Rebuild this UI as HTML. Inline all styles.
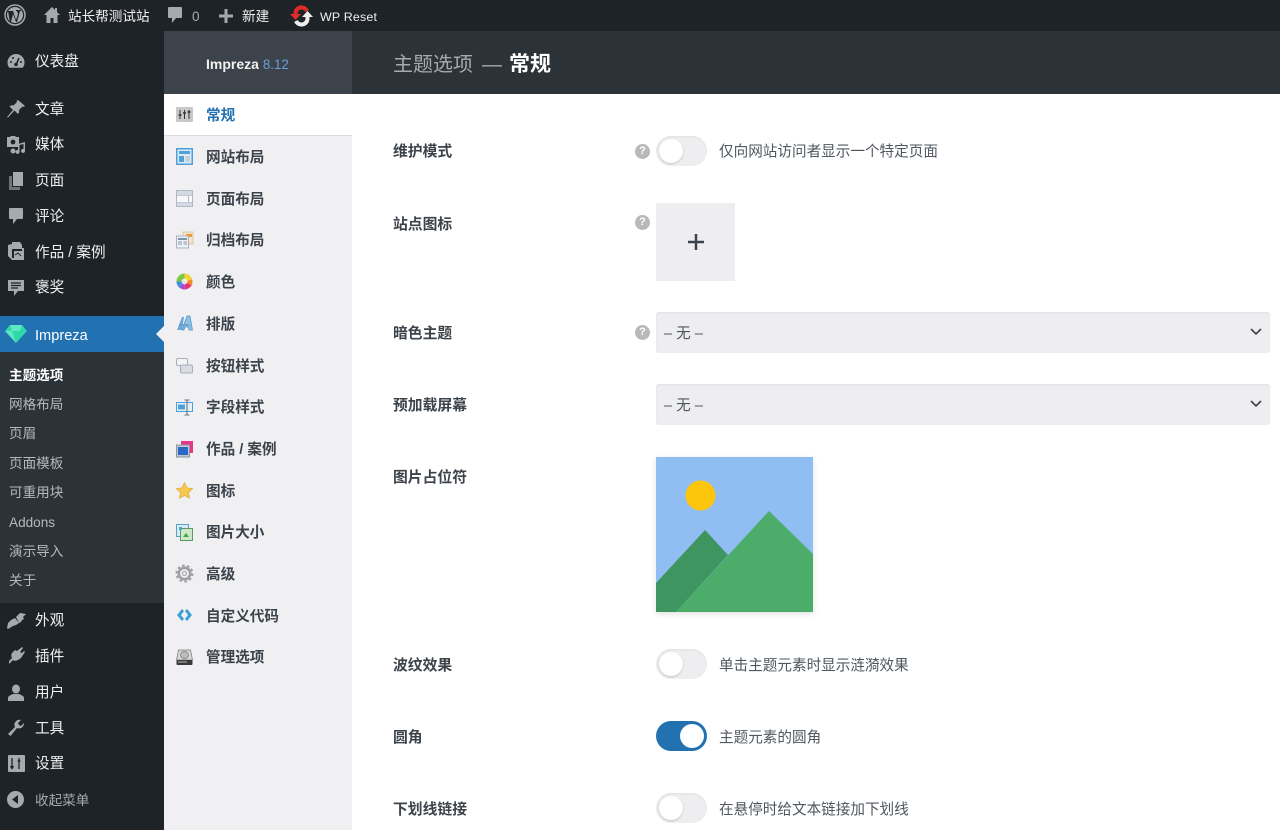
<!DOCTYPE html>
<html lang="zh-CN"><head><meta charset="utf-8"><title>主题选项</title>
<style>
*{box-sizing:border-box}
html,body{margin:0;padding:0;width:1280px;height:830px;overflow:hidden;background:#fff;font-family:"Liberation Sans","Noto Sans CJK SC",sans-serif}
.a{position:absolute}
.t{position:absolute;white-space:nowrap;line-height:20px;height:20px;margin-top:1px}
.m{color:#f0f0f1;font-size:14.6px;left:35px}
.s{color:#b4b9be;font-size:13.6px;left:9px}
.o{color:#3c434a;font-size:14.6px;font-weight:700;left:206px}
.l{color:#3c434a;font-size:14.8px;font-weight:700;left:393px}
.h{color:#50575e;font-size:14.6px;left:719px}
.ic{position:absolute;overflow:visible}
.tg{position:absolute;left:656px;width:51px;height:30px;border-radius:15px;background:#eeeef0;box-shadow:inset 0 1px 2px rgba(0,0,0,.06)}
.tg i{position:absolute;left:3px;top:3px;width:24px;height:24px;border-radius:50%;background:#fff;box-shadow:0 1px 2px rgba(0,0,0,.18)}
.tg.on{background:#2271b1;box-shadow:none}
.tg.on i{left:24px;box-shadow:none}
.q{position:absolute;left:635px;width:15px;height:15px;border-radius:50%;background:#b9b9bb;color:#fff;font-size:11px;font-weight:700;line-height:15px;text-align:center}
.sel{position:absolute;left:656px;width:614px;height:41px;background:#eeeef0;border-radius:3px;box-shadow:inset 0 1px 2px rgba(0,0,0,.06);color:#50575e;font-size:14.6px;line-height:45px;padding-left:8px}
.sel svg{position:absolute;left:594px;top:16px}
</style></head><body>

<!-- base regions -->
<div class="a" style="left:0;top:0;width:1280px;height:31px;background:#1d2327"></div>
<div class="a" style="left:0;top:31px;width:164px;height:799px;background:#1d2327"></div>
<div class="a" style="left:164px;top:31px;width:188px;height:63px;background:#3c434a"></div>
<div class="a" style="left:352px;top:31px;width:928px;height:63px;background:#2c3338"></div>
<div class="a" style="left:164px;top:94px;width:188px;height:736px;background:#f0f0f3"></div>
<div class="a" style="left:164px;top:94px;width:188px;height:42px;background:#fff;border-bottom:1px solid #dcdcde"></div>
<div class="a" style="left:0;top:316px;width:164px;height:36px;background:#2271b1"></div>
<div class="a" style="left:156px;top:326px;width:0;height:0;border-top:8px solid transparent;border-bottom:8px solid transparent;border-right:8px solid #f0f0f3"></div>
<div class="a" style="left:0;top:352px;width:164px;height:251px;background:#2c3338"></div>

<!-- admin bar -->
<svg class="ic" style="left:4px;top:4px" width="22" height="22" viewBox="0 0 22 22"><circle cx="11" cy="11" r="10" fill="none" stroke="#a7aaad" stroke-width="1.500"/><circle cx="11" cy="11" r="8" fill="#a7aaad"/><path d="M4 7h5l3 9 2-6-1-3h-1V6h5v1h-1l-3 11h-1L9 10l-2 8h-1z" fill="#1d2327"/></svg>
<svg class="ic" style="left:43px;top:6px" width="18" height="18" viewBox="0 0 18 18"><path d="M9 1 1 9h2.500v8H7.500v-5h3v5h4V9H17l-3-3V2h-2v2z" fill="#a7aaad"/></svg>
<span class="t" style="left:68px;top:6px;color:#f0f0f1;font-size:13.6px">站长帮测试站</span>
<svg class="ic" style="left:167px;top:6px" width="16" height="18" viewBox="0 0 16 18"><path d="M2 1h12a1 1 0 0 1 1 1v9a1 1 0 0 1-1 1H9l-4 5v-5H2a1 1 0 0 1-1-1V2a1 1 0 0 1 1-1z" fill="#a7aaad"/></svg>
<span class="t" style="left:192px;top:6px;color:#a7aaad;font-size:13.6px">0</span>
<svg class="ic" style="left:219px;top:9px" width="14" height="14" viewBox="0 0 14 14"><path d="M5.500 0h3v5.500H14v3H8.500V14h-3V8.500H0v-3h5.500z" fill="#a7aaad"/></svg>
<span class="t" style="left:242px;top:6px;color:#f0f0f1;font-size:13.6px">新建</span>
<svg class="ic" style="left:290px;top:6px" width="23" height="20" viewBox="0 0 23 20"><path d="M6 10A6 6 0 0 1 17 5" fill="none" stroke="#e02b2b" stroke-width="4"/><path d="M0 8h11l-5.500 6z" fill="#e02b2b"/><path d="M17 10A6 6 0 0 1 6 15" fill="none" stroke="#f0f0f1" stroke-width="4"/><path d="M12 11h11l-5.500-6z" fill="#f0f0f1"/></svg>
<span class="t" style="left:320px;top:6px;color:#f0f0f1;font-size:12.4px;letter-spacing:.2px">WP Reset</span>

<!-- admin menu icons -->
<svg class="ic" style="left:7px;top:53px" width="18" height="16" viewBox="0 0 18 16"><path d="M9 1a8.500 8.500 0 0 0-8.500 8.500c0 2 .7 3.800 1.800 5.200h13.400A8.300 8.300 0 0 0 17.500 9.500 8.500 8.500 0 0 0 9 1z" fill="#a7aaad"/><path d="M9.500 11 12 5" stroke="#1d2327" stroke-width="1.600"/><circle cx="9" cy="11.500" r="1.800" fill="#1d2327"/><circle cx="4" cy="9" r="1" fill="#1d2327"/><circle cx="6" cy="5" r="1" fill="#1d2327"/><circle cx="14" cy="9" r="1" fill="#1d2327"/></svg>
<svg class="ic" style="left:7px;top:100px" width="18" height="18" viewBox="0 0 18 18"><path d="M11 0l7 6-1.500 1-1-.5-3.500 3.500c.5 1.500 0 3-1 4L7.500 10.500 1 17.500 0 17l6-7-3.500-3.500c1-1 2.500-1.500 4-1L10 2l-.5-1z" fill="#a7aaad"/></svg>
<svg class="ic" style="left:6px;top:135px" width="20" height="19" viewBox="0 0 20 19"><path d="M1 2h3l1-1h4l1 1h3v10H1z" fill="#a7aaad"/><circle cx="7" cy="7" r="2.400" fill="#1d2327"/><path d="M19 7v9a2 2 0 1 1-1.500-2V9l-4 1v7a2 2 0 1 1-1.500-2v-6z" fill="#a7aaad"/><circle cx="7" cy="16" r="2.500" fill="#a7aaad"/></svg>
<svg class="ic" style="left:8px;top:172px" width="16" height="18" viewBox="0 0 16 18"><path d="M5 0h10v14H5z" fill="#a7aaad"/><path d="M1 4h3v11h8v3H1z" fill="#6f7479"/></svg>
<svg class="ic" style="left:8px;top:207px" width="16" height="18" viewBox="0 0 16 18"><path d="M2 1h12a1 1 0 0 1 1 1v9a1 1 0 0 1-1 1H9l-4 5v-5H2a1 1 0 0 1-1-1V2a1 1 0 0 1 1-1z" fill="#a7aaad"/></svg>
<svg class="ic" style="left:7px;top:242px" width="18" height="19" viewBox="0 0 18 19"><path d="M5 0h8l2 3v3h2v12H5L1 14V3l4-1z" fill="#a7aaad"/><path d="M5 7h10v9H5z" fill="#1d2327"/><path d="M7 9h8v7H7z" fill="#a7aaad"/><path d="M8 13l3-2 3 3" stroke="#1d2327" fill="none"/></svg>
<svg class="ic" style="left:7px;top:279px" width="18" height="18" viewBox="0 0 18 18"><path d="M1 1h16v11h-6l-4 5v-5H1z" fill="#a7aaad"/><path d="M4 4h10M4 6.500h10M4 9h7" stroke="#1d2327" stroke-width="1.200"/></svg>
<svg class="ic" style="left:4px;top:324px" width="24" height="20" viewBox="0 0 24 20"><path d="M6 1h12l5 6-11 12L1 7z" fill="#2ed8a8"/><path d="M6 1h12l-2 6H8zM1 7h7l4 12z" fill="#5ee8c4"/></svg>
<svg class="ic" style="left:6px;top:612px" width="20" height="18" viewBox="0 0 20 18"><path d="M10 5 14 1l6 1-3 3 1 2-2 1-1 2-2 1z" fill="#a7aaad"/><path d="M9 6l4 5-3 2-3 1-5 3-1-1 1-5 3-3z" fill="#a7aaad"/></svg>
<svg class="ic" style="left:8px;top:647px" width="18" height="18" viewBox="0 0 18 18"><path d="M14 0l1 1-3 4 2 1 2-2 1 1-2 3-2 3-3 2c-2 1-4 1-5 0l-4 4v-3l3-3c-1-2-1-3 0-5l3-3 2 1z" fill="#a7aaad"/></svg>
<svg class="ic" style="left:8px;top:684px" width="16" height="18" viewBox="0 0 16 18"><ellipse cx="8" cy="5" rx="4" ry="4.500" fill="#a7aaad"/><path d="M0 17v-3c0-2 3-3 5-4h6c2 1 5 2 5 4v3z" fill="#a7aaad"/></svg>
<svg class="ic" style="left:7px;top:719px" width="18" height="18" viewBox="0 0 18 18"><path d="M17 4a5 5 0 0 1-7 5L3.500 17 1 15 8 8A5 5 0 0 1 14 1l-3 3 1 2 2 1z" fill="#a7aaad"/></svg>
<svg class="ic" style="left:8px;top:755px" width="17" height="17" viewBox="0 0 17 17"><rect width="17" height="17" rx="1" fill="#a7aaad"/><path d="M4 3v11M2.500 11 4 13.500 5.500 11M11 3v11M9.500 6h3" stroke="#1d2327" stroke-width="1.300" fill="none"/></svg>
<svg class="ic" style="left:7px;top:791px" width="17" height="17" viewBox="0 0 17 17"><circle cx="8.500" cy="8.500" r="8.500" fill="#a7aaad"/><path d="M11 4v9L5 8.500z" fill="#1d2327"/></svg>

<!-- admin menu text -->
<span class="t m" style="top:51px">仪表盘</span>
<span class="t m" style="top:99px">文章</span>
<span class="t m" style="top:134px">媒体</span>
<span class="t m" style="top:170px">页面</span>
<span class="t m" style="top:206px">评论</span>
<span class="t m" style="top:242px">作品 / 案例</span>
<span class="t m" style="top:277px">褒奖</span>
<span class="t m" style="top:325px;color:#fff">Impreza</span>
<span class="t s" style="top:365px;color:#fff;font-weight:700">主题选项</span>
<span class="t s" style="top:394px">网格布局</span>
<span class="t s" style="top:423px">页眉</span>
<span class="t s" style="top:453px">页面模板</span>
<span class="t s" style="top:482px">可重用块</span>
<span class="t s" style="top:512px">Addons</span>
<span class="t s" style="top:541px">演示导入</span>
<span class="t s" style="top:570px">关于</span>
<span class="t m" style="top:610px">外观</span>
<span class="t m" style="top:646px">插件</span>
<span class="t m" style="top:682px">用户</span>
<span class="t m" style="top:718px">工具</span>
<span class="t m" style="top:753px">设置</span>
<span class="t" style="left:35px;top:790px;color:#a7aaad;font-size:13.6px">收起菜单</span>

<!-- header -->
<span class="t" style="left:206px;top:53px;color:#f0f0f1;font-size:14px;font-weight:700">Impreza <span style="color:#6b9fd8;font-weight:400;font-size:13.4px">8.12</span></span>
<span class="t" style="left:393px;top:51px;height:26px;line-height:26px;color:#a7aaad;font-size:20px">主题选项</span>
<span class="t" style="left:482px;top:51px;height:26px;line-height:26px;color:#a7aaad;font-size:20px">—</span>
<span class="t" style="left:509px;top:51px;height:26px;line-height:26px;color:#fff;font-size:21px;font-weight:700">常规</span>

<!-- options icons -->
<svg class="ic" style="left:176px;top:107px" width="17" height="15" viewBox="0 0 17 15"><rect width="17" height="15" rx="1" fill="#c8c8ca"/><path d="M4 3v9M8.500 3v9M13 3v9" stroke="#333" stroke-width="1"/><path d="M2.500 8h3M7 6h3M11.500 5h3" stroke="#333" stroke-width="1.400"/></svg>
<svg class="ic" style="left:176px;top:148px" width="17" height="17" viewBox="0 0 17 17"><rect x=".75" y=".75" width="15.500" height="15.500" fill="#dceaf5" stroke="#4f9fd8" stroke-width="1.500"/><path d="M3 3h11v3H3z" fill="#4f9fd8"/><path d="M3 8h5v6H3z" fill="#4f9fd8"/><path d="M9.500 8H14v6H9.500z" fill="#c8cfd6"/></svg>
<svg class="ic" style="left:176px;top:190px" width="17" height="17" viewBox="0 0 17 17"><rect x=".5" y=".5" width="16" height="16" fill="#f8f8fa" stroke="#b0b8c4"/><path d="M1 5.500h15M1 12.500h15M12.500 5.500v7" stroke="#b0b8c4"/><rect x="1" y="1" width="15" height="4.500" fill="#d5dae2"/><rect x="1" y="12.500" width="15" height="3.500" fill="#d5dae2"/></svg>
<svg class="ic" style="left:176px;top:231px" width="17" height="18" viewBox="0 0 17 18"><rect x="7" y="1" width="10" height="12" fill="#f7e3cc" stroke="#d8b48c" stroke-width=".7"/><rect x="10" y="3" width="6" height="3" fill="#ec9a3f"/><rect x=".5" y="5" width="12" height="12" fill="#eef1f5" stroke="#aab2bd"/><rect x="2" y="7" width="9" height="2" fill="#7d92ad"/><path d="M2 11h4M2 13h4M7.500 11h3.500M7.500 13h3.500" stroke="#8a98aa"/></svg>
<svg class="ic" style="left:176px;top:273px" width="17" height="17" viewBox="0 0 17 17"><defs><clipPath id="cw"><circle cx="8.500" cy="8.500" r="8"/></clipPath></defs><g clip-path="url(#cw)"><path d="M8.500 8.500 8.500 0H0V8.500z" fill="#7ac943"/><path d="M8.500 8.500V0H17V6z" fill="#f5d33a"/><path d="M8.500 8.500 17 6V13z" fill="#f28c28"/><path d="M8.500 8.500 17 13V17H9z" fill="#e8336d"/><path d="M8.500 8.500 9 17H1z" fill="#a24bd8"/><path d="M8.500 8.500 1 17 0 8.500z" fill="#3f8fe0"/></g><circle cx="8.500" cy="8.500" r="3" fill="#fff" opacity=".75"/></svg>
<svg class="ic" style="left:176px;top:315px" width="17" height="17" viewBox="0 0 17 17"><path d="M1 15 6 2h2L6 15z" fill="#6aa9d8"/><path d="M6 15 11 1h3l2.500 14H13l-.5-3H9l-1 3z" fill="#8cc0e6" stroke="#4f8fc4" stroke-width=".7"/><path d="M3 10h10" stroke="#4f8fc4"/></svg>
<svg class="ic" style="left:176px;top:358px" width="17" height="16" viewBox="0 0 17 16"><rect x=".5" y=".5" width="11" height="7" rx="1.500" fill="#f4f4f6" stroke="#a8aeb6"/><rect x="4.500" y="7" width="12" height="8" rx="1.500" fill="#d9dde3" stroke="#a8aeb6"/></svg>
<svg class="ic" style="left:176px;top:399px" width="17" height="17" viewBox="0 0 17 17"><rect x=".5" y="3.500" width="16" height="9" fill="#e4f0f8" stroke="#4f9fd8"/><rect x="2" y="5.500" width="7" height="5" fill="#4f9fd8"/><path d="M11 1v15M8.500 1h5M8.500 16h5" stroke="#6b7480" stroke-width="1.100"/></svg>
<svg class="ic" style="left:176px;top:441px" width="17" height="17" viewBox="0 0 17 17"><rect x="5" y="0" width="12" height="12" fill="#e8358c"/><rect x=".5" y="4" width="13" height="12" fill="#c2c8d0" stroke="#8a94a0"/><rect x="2" y="6" width="10" height="8" fill="#2a68c8"/></svg>
<svg class="ic" style="left:176px;top:482px" width="17" height="17" viewBox="0 0 17 17"><path d="M8.500.5l2.500 5.300 5.700.8-4.100 4 1 5.700-5.100-2.700-5.100 2.700 1-5.700-4.100-4 5.700-.8z" fill="#f6c851" stroke="#e0a530" stroke-width=".6"/></svg>
<svg class="ic" style="left:176px;top:524px" width="17" height="17" viewBox="0 0 17 17"><rect x=".5" y=".5" width="12" height="12" fill="#d8ecf4" stroke="#5aa0c8"/><rect x="4.500" y="4.500" width="12" height="12" fill="#cfe8cc" stroke="#5a9a60"/><path d="M7 13l3-4 3 4z" fill="#3fa648"/><rect x="3" y="3" width="3" height="3" fill="#5aa0c8"/></svg>
<svg class="ic" style="left:176px;top:565px" width="17" height="17" viewBox="0 0 17 17"><circle cx="8.500" cy="8.500" r="5.700" fill="none" stroke="#a0a0a2" stroke-width="2.600"/><circle cx="8.500" cy="8.500" r="8" fill="none" stroke="#a0a0a2" stroke-width="2" stroke-dasharray="2.600 2.400"/><circle cx="8.500" cy="8.500" r="2" fill="none" stroke="#a0a0a2"/></svg>
<svg class="ic" style="left:176px;top:608px" width="17" height="14" viewBox="0 0 17 14"><path d="M6 1 1 7l5 6 2-2-3-4 3-4z" fill="#3d9fd6"/><path d="M11 1l5 6-5 6-2-2 3-4-3-4z" fill="#3d9fd6"/></svg>
<svg class="ic" style="left:176px;top:649px" width="17" height="17" viewBox="0 0 17 17"><path d="M2.500 1h12l2 10H.5z" fill="#d8d8da" stroke="#777" stroke-width=".7"/><ellipse cx="8.500" cy="6" rx="4" ry="3.500" fill="#bbb" stroke="#777" stroke-width=".7"/><rect x=".5" y="11" width="16" height="5" rx="1" fill="#3a3a3c"/><path d="M2 13h9" stroke="#bbb"/></svg>

<!-- options menu text -->
<span class="t o" style="top:105px;color:#2271b1">常规</span>
<span class="t o" style="top:147px">网站布局</span>
<span class="t o" style="top:189px">页面布局</span>
<span class="t o" style="top:230px">归档布局</span>
<span class="t o" style="top:272px">颜色</span>
<span class="t o" style="top:314px">排版</span>
<span class="t o" style="top:356px">按钮样式</span>
<span class="t o" style="top:397px">字段样式</span>
<span class="t o" style="top:439px">作品 / 案例</span>
<span class="t o" style="top:481px">图标</span>
<span class="t o" style="top:522px">图片大小</span>
<span class="t o" style="top:564px">高级</span>
<span class="t o" style="top:606px">自定义代码</span>
<span class="t o" style="top:647px">管理选项</span>

<!-- main form -->
<span class="t l" style="top:141px">维护模式</span>
<span class="q" style="top:144px">?</span>
<div class="tg" style="top:136px"><i></i></div>
<span class="t h" style="top:141px">仅向网站访问者显示一个特定页面</span>

<span class="t l" style="top:214px">站点图标</span>
<span class="q" style="top:215px">?</span>
<div class="a" style="left:656px;top:203px;width:79px;height:78px;background:#eeeef0"></div>
<svg class="ic" style="left:688px;top:234px" width="16" height="16" viewBox="0 0 16 16"><path d="M8 0v16M0 8h16" stroke="#3c434a" stroke-width="2.500"/></svg>

<span class="t l" style="top:323px">暗色主题</span>
<span class="q" style="top:325px">?</span>
<div class="sel" style="top:312px">– 无 –<svg width="12" height="8" viewBox="0 0 12 8"><path d="M1 1l5 5 5-5" fill="none" stroke="#3c434a" stroke-width="1.600"/></svg></div>

<span class="t l" style="top:395px">预加载屏幕</span>
<div class="sel" style="top:384px">– 无 –<svg width="12" height="8" viewBox="0 0 12 8"><path d="M1 1l5 5 5-5" fill="none" stroke="#3c434a" stroke-width="1.600"/></svg></div>

<span class="t l" style="top:467px">图片占位符</span>
<svg class="ic" style="left:656px;top:457px;box-shadow:0 2px 6px rgba(0,0,0,.12)" width="157" height="155" viewBox="0 0 157 155"><rect width="157" height="155" fill="#90bdf2"/><circle cx="44.500" cy="38.500" r="15" fill="#fdc50c"/><path d="M0 126 49 73 72 98 20 155H0z" fill="#3f9560"/><path d="M20 155 113 54 157 97V155z" fill="#4cad6b"/></svg>

<span class="t l" style="top:655px">波纹效果</span>
<div class="tg" style="top:649px"><i></i></div>
<span class="t h" style="top:655px">单击主题元素时显示涟漪效果</span>

<span class="t l" style="top:727px">圆角</span>
<div class="tg on" style="top:721px"><i></i></div>
<span class="t h" style="top:727px">主题元素的圆角</span>

<span class="t l" style="top:799px">下划线链接</span>
<div class="tg" style="top:793px"><i></i></div>
<span class="t h" style="top:799px">在悬停时给文本链接加下划线</span>

</body></html>
